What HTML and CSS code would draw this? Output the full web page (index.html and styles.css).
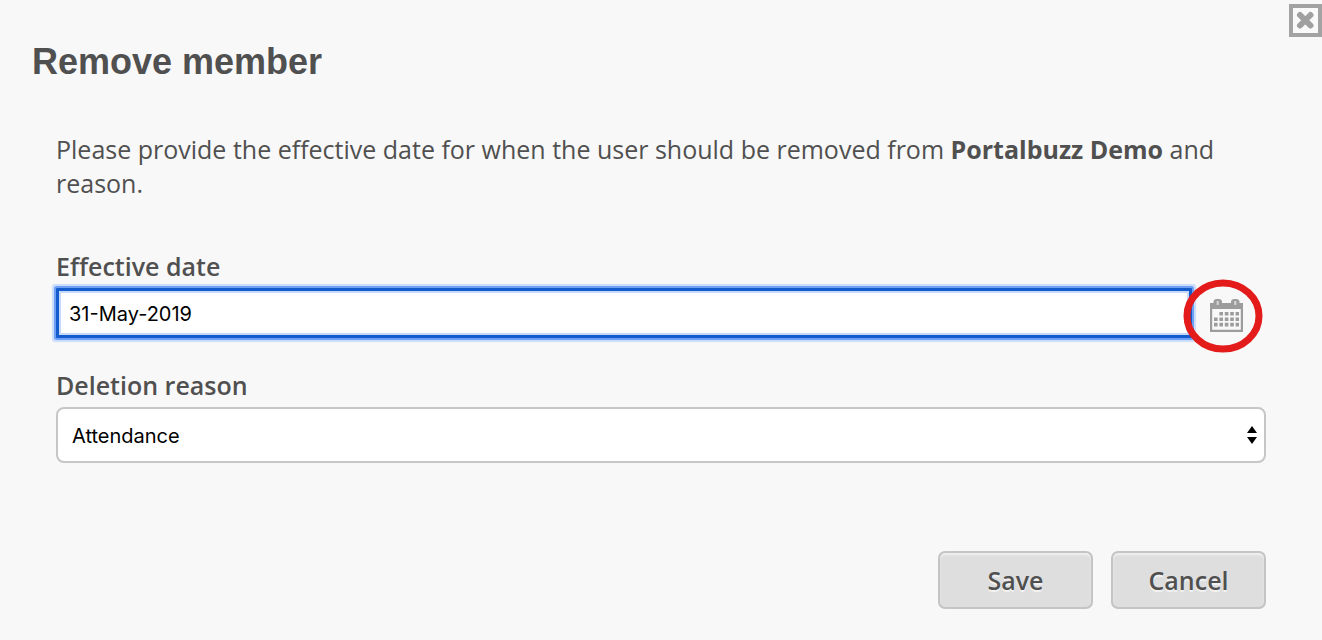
FILE: index.html
```html
<!DOCTYPE html>
<html lang="en">
  <head>
    <meta charset="UTF-8" />
    <meta name="viewport" content="width=device-width, initial-scale=1.0" />
    <title>Remove member</title>
    <link rel="stylesheet" href="styles.css">
  </head>
  <body>
    <main class="dialog">
      <button class="close" type="button" aria-label="Close">
        <svg width="33" height="33" viewBox="0 0 33 33">
          <rect x="2" y="2" width="29" height="29" fill="#fafafa" stroke="#a3a3a3" stroke-width="4" />
          <path d="M11 11L21.5 21.5M21.5 11L11 21.5" stroke="#a0a0a0" stroke-width="6" stroke-linecap="round" />
        </svg>
      </button>
      <h1 class="title">Remove member</h1>
      <form class="form">
        <p class="intro">
          Please provide the effective date for when the user should be removed
          from <strong>Portalbuzz Demo</strong> and reason.
        </p>
        <div class="field">
          <label for="date">Effective date</label>
          <div class="date-row">
            <input class="date" id="date" type="text" value="31-May-2019" />
            <button class="calendar" type="button" aria-label="Choose date">
              <svg width="34" height="34" viewBox="0 0 34 34">
                <path fill="#9c9c9c" fill-rule="evenodd" d="M0 4H3.5V3Q3.5 0 7 0H8.500Q12 0 12 3V4H21V3Q21 0 24.500 0H26Q29.500 0 29.500 3V4H33V33H0ZM2.200 10V30.800H30.800V10Z" />
                <path stroke="#d8d8d8" stroke-width="2" d="M7.700 2V6M25.300 2V6" />
                <path stroke="#9c9c9c" stroke-width="3.6" stroke-dasharray="3.6 1.8" d="M9.400 14.800H29M4 20.200H29M4 25.600H29" />
              </svg>
              <svg class="ring" width="80" height="74" viewBox="0 0 80 74">
                <ellipse cx="40" cy="37" rx="36" ry="33" fill="none" stroke="#e31b1b" stroke-width="7" />
              </svg>
            </button>
          </div>
        </div>
        <div class="field">
          <label for="reason">Deletion reason</label>
          <div class="select-wrap">
            <select class="reason" id="reason">
              <option>Attendance</option>
            </select>
            <svg class="arrows" width="10" height="18" viewBox="0 0 10 18">
              <path d="M5 0L10 7H0ZM0 11H10L5 18Z" />
            </svg>
          </div>
        </div>
        <div class="actions">
          <button class="button" type="submit">Save</button>
          <button class="button" type="button">Cancel</button>
        </div>
      </form>
    </main>
  </body>
</html>
```

FILE: styles.css
```css
* {
  box-sizing: border-box;
}
body {
  margin: 0;
  background-color: #f8f8f8;
  color: #505050;
  font-family: "Open Sans", sans-serif;
  font-size: 25px;
  line-height: 34px;
}
.dialog {
  position: relative;
  padding: 40px 56px 32px 32px;
}
.close {
  position: absolute;
  top: 4px;
  right: 0;
  padding: 0;
  border: 0;
  background: none;
  cursor: pointer;
}
.close svg,
.calendar svg {
  display: block;
}
.title {
  margin: 0 0 48px;
  font-family: "Liberation Sans", Arial, sans-serif;
  font-size: 36px;
  line-height: 44px;
}
.form {
  padding-left: 24px;
}
.intro {
  margin: 0 0 49px;
}
.field {
  margin-bottom: 30px;
}
.field label {
  display: block;
  margin-bottom: 5px;
  font-weight: 600;
}
.date-row {
  display: flex;
  align-items: center;
  gap: 18px;
}
.date,
.reason {
  font-family: Inter, sans-serif;
  font-size: 20px;
  color: #000;
  background-color: #fff;
}
.date {
  flex: 1;
  min-width: 0;
  height: 50px;
  padding: 2px 10px 0;
  border: 3px solid #145ccc;
  border-radius: 1px;
  outline: 0;
  box-shadow: 0 0 0 2px #6da0f5, 0 0 1px 4px #c9dcfb, inset 0 0 0 2px #c4d8fb;
}
.calendar {
  position: relative;
  margin-right: 22px;
  padding: 6px 0 0;
  border: 0;
  background: none;
  cursor: pointer;
}
.calendar .ring {
  position: absolute;
  top: -14px;
  left: -27px;
}
.select-wrap {
  position: relative;
}
.reason {
  display: block;
  width: 100%;
  height: 56px;
  padding: 2px 14px 0;
  border: 2px solid #c6c6c6;
  border-radius: 8px;
  appearance: none;
}
.arrows {
  position: absolute;
  top: 19px;
  right: 9px;
  pointer-events: none;
}
.actions {
  display: flex;
  justify-content: flex-end;
  gap: 18px;
  margin-top: 88px;
}
.button {
  width: 155px;
  height: 58px;
  border: 2px solid #c4c4c4;
  border-radius: 7px;
  background-color: #dedede;
  box-shadow: inset 0 2px 2px #f0f0f0;
  color: #505050;
  font: inherit;
  font-weight: 600;
  text-shadow: 0 2px 1px #f4f4f4;
  cursor: pointer;
}
```
